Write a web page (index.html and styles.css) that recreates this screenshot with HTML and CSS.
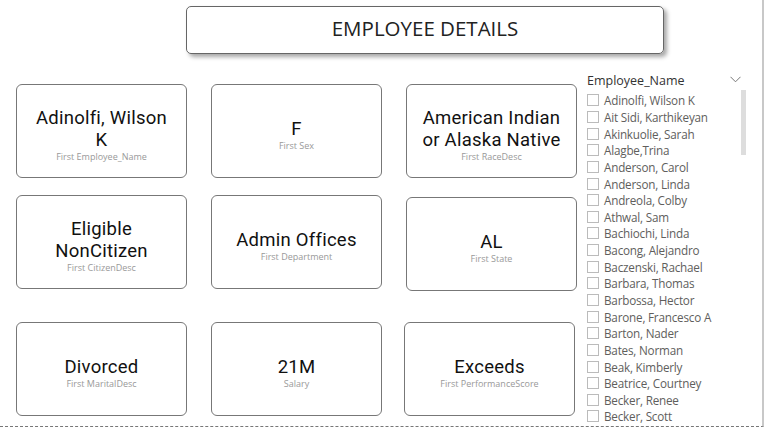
FILE: index.html
```html
<!DOCTYPE html>
<html>
<head>
<meta charset="utf-8">
<link rel="stylesheet" href="styles.css">
</head>
<body>
<div class="page">
  <div class="title-row">
    <div class="title">EMPLOYEE DETAILS</div>
  </div>
  <div class="content">
    <div class="cards">
      <div class="row row1">
        <div class="card"><div class="val">Adinolfi, Wilson K</div><div class="lbl">First Employee_Name</div></div>
        <div class="card"><div class="val">F</div><div class="lbl">First Sex</div></div>
        <div class="card"><div class="val">American Indian or Alaska Native</div><div class="lbl">First RaceDesc</div></div>
      </div>
      <div class="row row2">
        <div class="card"><div class="val narrow">Eligible NonCitizen</div><div class="lbl">First CitizenDesc</div></div>
        <div class="card"><div class="val">Admin Offices</div><div class="lbl">First Department</div></div>
        <div class="card low"><div class="val">AL</div><div class="lbl">First State</div></div>
      </div>
      <div class="row row3">
        <div class="card"><div class="val">Divorced</div><div class="lbl">First MaritalDesc</div></div>
        <div class="card"><div class="val">21M</div><div class="lbl">Salary</div></div>
        <div class="card shift"><div class="val">Exceeds</div><div class="lbl">First PerformanceScore</div></div>
      </div>
    </div>
    <div class="slicer">
      <div class="slicer-head">
        <span class="slicer-title">Employee_Name</span>
        <svg class="chev" width="11" height="7" viewBox="0 0 11 7"><path d="M0.5 0.8 L5.5 5.8 L10.5 0.8" fill="none" stroke="#777" stroke-width="1"/></svg>
      </div>
      <div class="slicer-body">
        <ul class="list">
          <li><span class="box"></span>Adinolfi, Wilson K</li>
          <li><span class="box"></span>Ait Sidi, Karthikeyan</li>
          <li><span class="box"></span>Akinkuolie, Sarah</li>
          <li><span class="box"></span>Alagbe,Trina</li>
          <li><span class="box"></span>Anderson, Carol</li>
          <li><span class="box"></span>Anderson, Linda</li>
          <li><span class="box"></span>Andreola, Colby</li>
          <li><span class="box"></span>Athwal, Sam</li>
          <li><span class="box"></span>Bachiochi, Linda</li>
          <li><span class="box"></span>Bacong, Alejandro</li>
          <li><span class="box"></span>Baczenski, Rachael</li>
          <li><span class="box"></span>Barbara, Thomas</li>
          <li><span class="box"></span>Barbossa, Hector</li>
          <li><span class="box"></span>Barone, Francesco A</li>
          <li><span class="box"></span>Barton, Nader</li>
          <li><span class="box"></span>Bates, Norman</li>
          <li><span class="box"></span>Beak, Kimberly</li>
          <li><span class="box"></span>Beatrice, Courtney</li>
          <li><span class="box"></span>Becker, Renee</li>
          <li><span class="box"></span>Becker, Scott</li>
        </ul>
        <div class="scroll"><div class="thumb"></div></div>
      </div>
    </div>
  </div>
</div>
</body>
</html>
```
FILE: styles.css
```css
html, body {
  margin: 0;
  padding: 0;
  background: #fff;
}
.page {
  width: 762px;
  height: 426px;
  border-right: 2px solid #c8c8c8;
  border-bottom: 1px dashed #777;
  overflow: hidden;
  position: relative;
  font-family: "Open Sans", "Noto Sans", sans-serif;
}
.title-row {
  padding-top: 6px;
  padding-left: 186px;
}
.title {
  width: 476px;
  border: 1px solid #666;
  border-radius: 5px;
  box-shadow: 3px 3px 4px rgba(0,0,0,0.35);
  display: flex;
  align-items: center;
  justify-content: center;
  padding-bottom: 4px;
  box-sizing: content-box;
  height: 42px;
  font-family: "Open Sans", sans-serif;
  font-size: 20.5px;
  color: #222;
}
.content {
  display: flex;
  margin-top: 18px;
}
.cards {
  width: 580px;
  padding-left: 16px;
  box-sizing: border-box;
}
.row {
  display: flex;
  gap: 24px;
}
.row1 { margin-top: 12px; }
.row2 { margin-top: 17px; }
.row3 { margin-top: 31px; }
.card {
  width: 169px;
  height: 84px;
  padding-top: 8px;
  border: 1px solid #777;
  border-radius: 6px;
  display: flex;
  flex-direction: column;
  align-items: center;
  justify-content: center;
  text-align: center;
  box-sizing: content-box;
}
.card.low { margin-top: 2px; }
.card.shift { margin-left: -2px; }
.val {
  font-family: Roboto, "DejaVu Sans", sans-serif;
  font-size: 18.5px;
  line-height: 22px;
  color: #111;
  max-width: 146px;
  letter-spacing: 0.25px;
}
.val.narrow { max-width: 110px; }
.lbl {
  font-family: "Open Sans", sans-serif;
  font-size: 9px;
  color: #999;
  line-height: 12px;
}
.slicer {
  width: 182px;
  padding-left: 7px;
  margin-top: -1px;
  box-sizing: border-box;
}
.slicer-head {
  display: flex;
  align-items: center;
  justify-content: space-between;
  height: 18px;
  padding-right: 21px;
}
.slicer-title {
  font-size: 12.5px;
  color: #333;
}
.chev { margin-top: -1px; }
.slicer-body {
  position: relative;
  margin-top: 3px;
}
.list {
  list-style: none;
  margin: 0;
  padding: 0;
}
.list li {
  display: flex;
  align-items: center;
  height: 16.65px;
  font-size: 11.7px;
  color: #605e5c;
  white-space: nowrap;
  letter-spacing: -0.2px;
}
.box {
  width: 10px;
  height: 10px;
  border: 1px solid #bbb;
  margin-right: 5px;
  flex: none;
}
.scroll {
  position: absolute;
  left: 154px;
  top: -2px;
  width: 5px;
  height: 65px;
}
.thumb {
  width: 100%;
  height: 100%;
  background: #ddd;
}
```
